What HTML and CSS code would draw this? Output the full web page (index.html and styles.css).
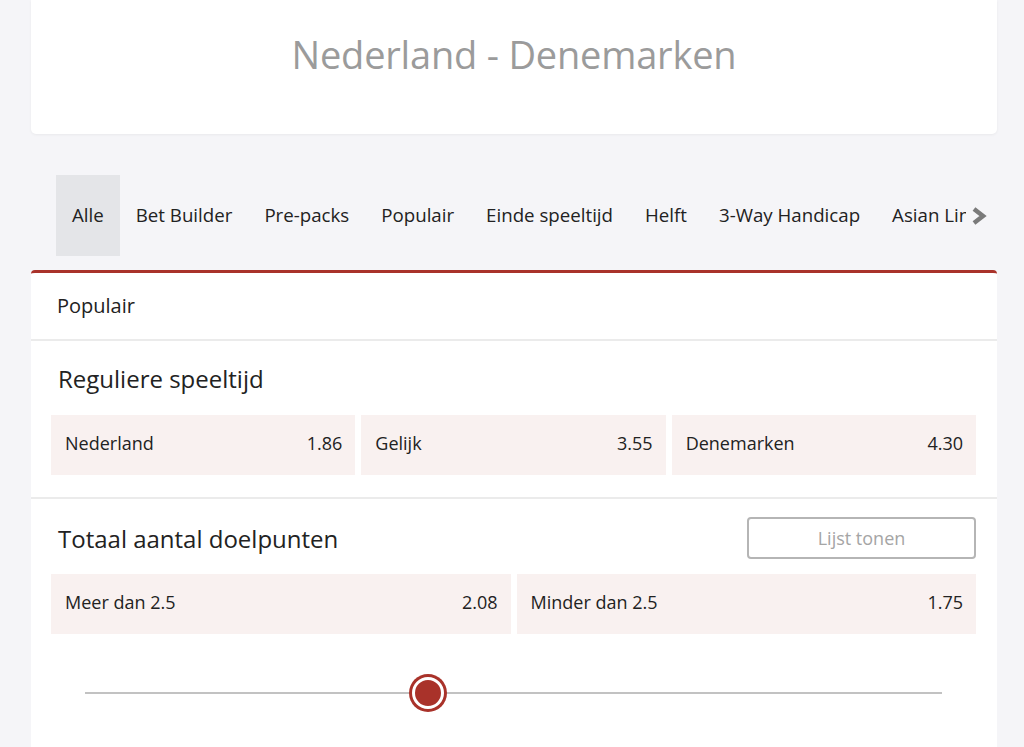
FILE: index.html
```html
<!DOCTYPE html>
<html lang="nl">
<head>
    <meta charset="UTF-8">
    <title>Nederland - Denemarken</title>
    <link rel="stylesheet" href="styles.css">
</head>
<body>

<div class="page">
    <div class="match-header">
        <h1>Nederland - Denemarken</h1>
    </div>

    <div class="tab-bar">
        <div class="tabs">
            <div class="tab active">Alle</div>
            <div class="tab">Bet Builder</div>
            <div class="tab">Pre-packs</div>
            <div class="tab">Populair</div>
            <div class="tab">Einde speeltijd</div>
            <div class="tab">Helft</div>
            <div class="tab">3-Way Handicap</div>
            <div class="tab">Asian Lines</div>
        </div>
        <div class="tab-next">
            <svg width="16" height="18" viewBox="0 0 16 18"><path d="M3 2 L12 9 L3 16" fill="none" stroke="#7a7a7a" stroke-width="4.5" stroke-linejoin="miter"/></svg>
        </div>
    </div>

    <div class="market-card">
        <div class="card-head">Populair</div>

        <div class="market">
            <div class="market-title">
                <h2>Reguliere speeltijd</h2>
            </div>
            <div class="odds-row">
                <div class="odd"><span>Nederland</span><span>1.86</span></div>
                <div class="odd"><span>Gelijk</span><span>3.55</span></div>
                <div class="odd"><span>Denemarken</span><span>4.30</span></div>
            </div>
        </div>

        <div class="market last">
            <div class="market-title">
                <h2>Totaal aantal doelpunten</h2>
                <button class="list-btn">Lijst tonen</button>
            </div>
            <div class="odds-row">
                <div class="odd"><span>Meer dan 2.5</span><span>2.08</span></div>
                <div class="odd"><span>Minder dan 2.5</span><span>1.75</span></div>
            </div>
            <div class="slider">
                <div class="slider-track"></div>
                <div class="slider-knob" style="left: 40%"></div>
            </div>
        </div>
    </div>
</div>

</body>
</html>
```

FILE: styles.css
```css
body {
    margin: 0;
    background-color: #f5f5f8;
    font-family: 'Open Sans', 'Noto Sans', sans-serif;
    color: #222;
}

.page {
    padding: 0 27px 0 31px;
}

.match-header {
    height: 134px;
    background-color: #fff;
    border-radius: 0 0 5px 5px;
    box-shadow: 0 1px 3px rgba(0, 0, 0, 0.05);
    display: flex;
    justify-content: center;
    align-items: center;
}

.match-header h1 {
    margin: 0 0 27px;
    font-size: 38px;
    font-weight: 400;
    color: #9b9b9b;
    letter-spacing: -0.2px;
}

.tab-bar {
    display: flex;
    align-items: center;
    margin-top: 41px;
    padding-left: 25px;
    height: 81px;
}

.tabs {
    display: flex;
    width: 910px;
    overflow: hidden;
    height: 100%;
}

.tab {
    display: flex;
    align-items: center;
    padding: 0 16px 2px;
    font-size: 18.7px;
    white-space: nowrap;
    color: #222;
}

.tab.active {
    background-color: #e4e5e8;
}

.tab-next {
    display: flex;
    align-items: center;
    margin-left: 5px;
}

.market-card {
    margin-top: 14px;
    background-color: #fff;
    border-top: 3px solid #a9322a;
    border-radius: 4px 4px 0 0;
    height: 480px;
}

.card-head {
    height: 68px;
    display: flex;
    align-items: center;
    padding-left: 26px;
    padding-bottom: 2px;
    box-sizing: border-box;
    font-size: 20px;
    border-bottom: 2px solid #ebebeb;
}

.market {
    padding: 0 21px 22px 20px;
    border-bottom: 2px solid #ebebeb;
}

.market.last {
    border-bottom: none;
}

.market-title {
    display: flex;
    justify-content: space-between;
    align-items: center;
    height: 74px;
    padding-left: 7px;
}

.market.last .market-title {
    height: 72px;
    padding-top: 3px;
}

.market-title h2 {
    margin: 0;
    font-size: 24px;
    font-weight: 400;
    color: #222;
}

.list-btn {
    width: 229px;
    height: 42px;
    background: #fff;
    border: 2px solid #b5b5b5;
    border-radius: 4px;
    font-family: inherit;
    font-size: 18px;
    color: #a5a5a5;
}

.odds-row {
    display: flex;
    gap: 6px;
}

.odd {
    flex: 1;
    height: 60px;
    display: flex;
    justify-content: space-between;
    align-items: center;
    padding: 0 13px 4px 14px;
    box-sizing: border-box;
    background-color: #f9f1f0;
    font-size: 18px;
}

.slider {
    position: relative;
    margin: 29px 34px 0 34px;
    height: 60px;
}

.slider-track {
    position: absolute;
    top: 29px;
    left: 0;
    right: 0;
    height: 2px;
    background-color: #c2c2c2;
}

.slider-knob {
    position: absolute;
    top: 14px;
    width: 26px;
    height: 26px;
    margin-left: -16px;
    border-radius: 50%;
    background-color: #a9322a;
    border: 3px solid #fff;
    box-shadow: 0 0 0 3px #a9322a;
}
```
